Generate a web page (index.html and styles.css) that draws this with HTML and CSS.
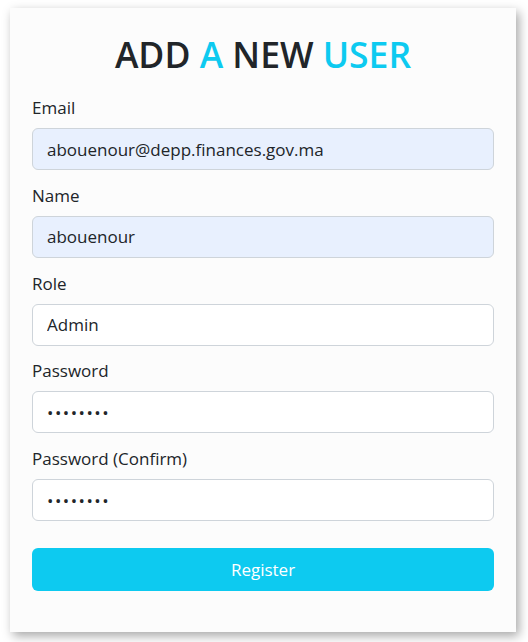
FILE: index.html
```html
<!DOCTYPE html>
<html lang="en">
<head>
<meta charset="utf-8">
<title>Add a new user</title>
<link rel="stylesheet" href="styles.css">
</head>
<body>
<div class="card">
  <h1 class="title">ADD <span class="accent">A</span> NEW <span class="accent">USER</span></h1>
  <form class="form">
    <div class="group">
      <label class="label" for="email">Email</label>
      <input class="control filled" id="email" type="text" value="abouenour@depp.finances.gov.ma">
    </div>
    <div class="group">
      <label class="label" for="name">Name</label>
      <input class="control filled" id="name" type="text" value="abouenour">
    </div>
    <div class="group">
      <label class="label" for="role">Role</label>
      <input class="control" id="role" type="text" value="Admin">
    </div>
    <div class="group">
      <label class="label" for="pw">Password</label>
      <input class="control secret" id="pw" type="password" value="12345678">
    </div>
    <div class="group">
      <label class="label" for="pw2">Password (Confirm)</label>
      <input class="control secret" id="pw2" type="password" value="12345678">
    </div>
    <button class="btn" type="button">Register</button>
  </form>
</div>
</body>
</html>
```
FILE: styles.css
```css
* { box-sizing: border-box; }
html, body { margin: 0; padding: 0; background: #ffffff; }
body {
  font-family: "Open Sans", "Noto Sans", sans-serif;
  color: #212529;
  font-size: 17px;
  line-height: 1.5;
  padding: 8px 12px 10px 10px;
}
.card {
  width: 506px;
  height: 624px;
  background: #fcfcfc;
  box-shadow: 3px 4px 10px rgba(0, 0, 0, 0.35);
  padding: 22px 22px;
}
.title {
  margin: 0 0 18px;
  font-size: 35.5px;
  font-weight: 600;
  line-height: 48px;
  text-align: center;
  color: #212529;
}
.accent { color: #0dcaf0; }
.form { display: flex; flex-direction: column; }
.group { display: flex; flex-direction: column; margin-bottom: 13.75px; }
.label { display: block; margin-bottom: 8px; font-size: 17px; line-height: 24px; }
.control {
  display: block;
  width: 100%;
  height: 42px;
  padding: 0 14px;
  font-family: inherit;
  font-size: 17px;
  color: #212529;
  background: #ffffff;
  border: 1px solid #ced4da;
  border-radius: 6px;
  outline: none;
}
.control.filled { background: #e8f0fe; }
.control.secret { letter-spacing: 1.5px; }
.btn {
  margin-top: 13px;
  height: 43px;
  width: 100%;
  border: 0;
  border-radius: 6px;
  background: #0dcaf0;
  color: #ffffff;
  font-family: inherit;
  font-size: 17px;
}
```
